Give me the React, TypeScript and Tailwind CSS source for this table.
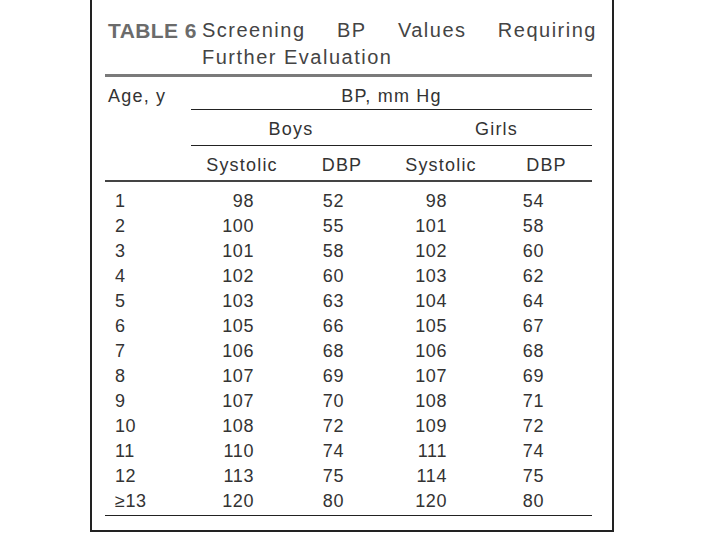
const rows: [string, number, number, number, number][] = [
  ['1', 98, 52, 98, 54],
  ['2', 100, 55, 101, 58],
  ['3', 101, 58, 102, 60],
  ['4', 102, 60, 103, 62],
  ['5', 103, 63, 104, 64],
  ['6', 105, 66, 105, 67],
  ['7', 106, 68, 106, 68],
  ['8', 107, 69, 107, 69],
  ['9', 107, 70, 108, 71],
  ['10', 108, 72, 109, 72],
  ['11', 110, 74, 111, 74],
  ['12', 113, 75, 114, 75],
  ['\u226513', 120, 80, 120, 80],
];

export default function App() {
  return (
    <div className="w-[720px] h-[540px] bg-white text-[#333] font-['Liberation_Sans',Arial,sans-serif]">
      <div className="ml-[90px] w-[524px] h-[532px] border-x-2 border-b-2 border-[#222] pl-[13px] pr-[20px]">
        {/* title */}
        <div className="flex pt-[17px] text-[20px] leading-[27px]">
          <div className="w-[97px] shrink-0 pl-[3px] text-[21px] font-bold text-[#6b6b6b] tracking-[0.4px]">TABLE 6</div>
          <div className="w-[395px] shrink-0 text-[#444] tracking-[1.5px]">
            <div className="flex justify-between">
              <span>Screening</span>
              <span>BP</span>
              <span>Values</span>
              <span>Requiring</span>
            </div>
            <div>Further Evaluation</div>
          </div>
        </div>
        <div className="mt-[3px] h-[3px] bg-[#7a7a7a]" />

        {/* header */}
        <div className="grid grid-cols-[86px_401px] text-[18px] leading-[20px] tracking-[1.2px]">
          <div className="pl-[3px] pt-[9px]">Age, y</div>
          <div>
            <div className="h-[33px] pt-[9px] text-center border-b border-[#222]">BP, mm Hg</div>
            <div className="grid grid-cols-[200px_201px] h-[36px] pt-[9px] border-b border-[#222]">
              <div className="text-center">Boys</div>
              <div className="text-center pl-[10px]">Girls</div>
            </div>
            <div className="grid grid-cols-[102px_98px_100px_101px] h-[34px] pt-[9px]">
              <div className="text-center">Systolic</div>
              <div className="text-center">DBP</div>
              <div className="text-center">Systolic</div>
              <div className="text-center pl-[10px]">DBP</div>
            </div>
          </div>
        </div>
        <div className="h-[2px] bg-[#444]" />

        {/* data */}
        <div className="pt-[7px] text-[18px] leading-[25px] tracking-[0.6px]">
          {rows.map(([age, bs, bd, gs, gd]) => (
            <div key={age} className="grid grid-cols-[86px_102px_98px_100px_101px] h-[25px]">
              <div className="pl-[10px]">{age}</div>
              <div className="text-right pr-[39px]">{bs}</div>
              <div className="text-right pr-[47px]">{bd}</div>
              <div className="text-right pr-[44px]">{gs}</div>
              <div className="text-right pr-[48px]">{gd}</div>
            </div>
          ))}
        </div>
        <div className="mt-[1px] h-px bg-[#222]" />
      </div>
    </div>
  );
}
